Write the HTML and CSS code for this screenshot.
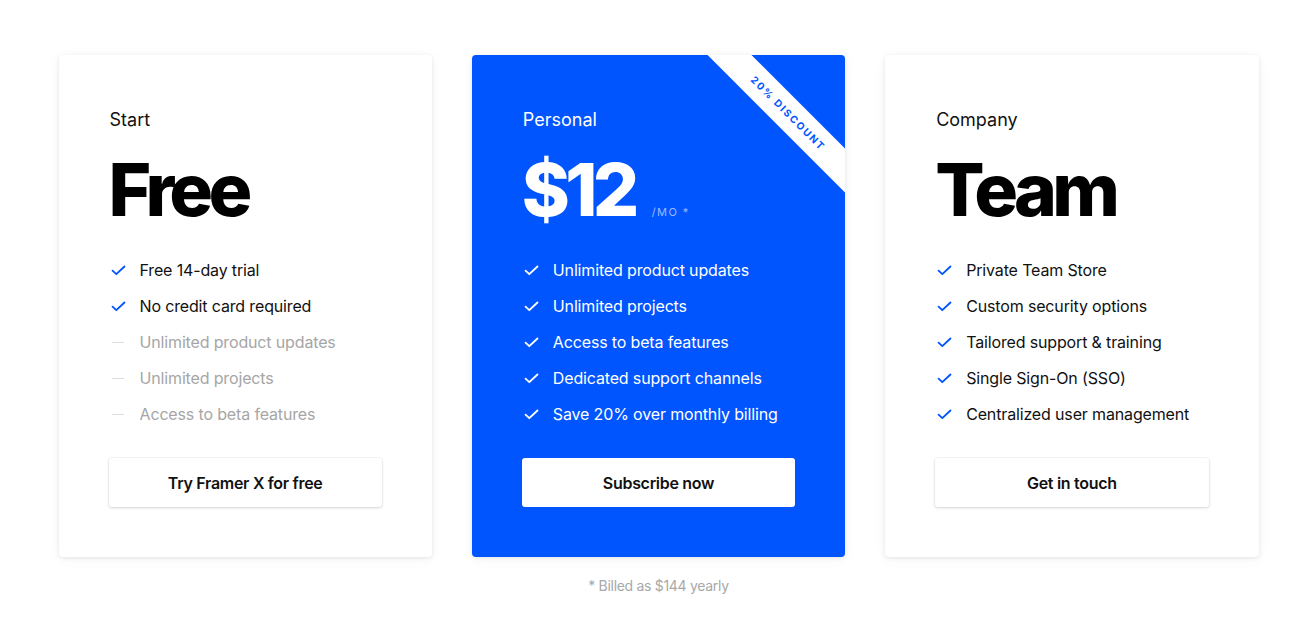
FILE: index.html
```html
<!DOCTYPE html>
<html lang="en">
<head>
<meta charset="utf-8">
<title>Pricing</title>
<link rel="stylesheet" href="styles.css">
</head>
<body>
<main class="pricing">
  <div class="cards">
    <section class="card">
      <div class="label">Start</div>
      <div class="price"><span class="amount">Free</span></div>
      <ul class="features">
        <li class="on"><svg class="ic" viewBox="0 0 16 12"><path d="M1.5 6.2 L5.6 10 L14.5 1.6"/></svg>Free 14-day trial</li>
        <li class="on"><svg class="ic" viewBox="0 0 16 12"><path d="M1.5 6.2 L5.6 10 L14.5 1.6"/></svg>No credit card required</li>
        <li class="off"><span class="dash"></span>Unlimited product updates</li>
        <li class="off"><span class="dash"></span>Unlimited projects</li>
        <li class="off"><span class="dash"></span>Access to beta features</li>
      </ul>
      <button class="btn">Try Framer X for free</button>
    </section>
    <section class="card card-blue">
      <div class="ribbon">20% DISCOUNT</div>
      <div class="label">Personal</div>
      <div class="price"><span class="amount">$12</span><span class="per">/MO *</span></div>
      <ul class="features">
        <li class="on"><svg class="ic" viewBox="0 0 16 12"><path d="M1.5 6.2 L5.6 10 L14.5 1.6"/></svg>Unlimited product updates</li>
        <li class="on"><svg class="ic" viewBox="0 0 16 12"><path d="M1.5 6.2 L5.6 10 L14.5 1.6"/></svg>Unlimited projects</li>
        <li class="on"><svg class="ic" viewBox="0 0 16 12"><path d="M1.5 6.2 L5.6 10 L14.5 1.6"/></svg>Access to beta features</li>
        <li class="on"><svg class="ic" viewBox="0 0 16 12"><path d="M1.5 6.2 L5.6 10 L14.5 1.6"/></svg>Dedicated support channels</li>
        <li class="on"><svg class="ic" viewBox="0 0 16 12"><path d="M1.5 6.2 L5.6 10 L14.5 1.6"/></svg>Save 20% over monthly billing</li>
      </ul>
      <button class="btn">Subscribe now</button>
    </section>
    <section class="card">
      <div class="label">Company</div>
      <div class="price"><span class="amount">Team</span></div>
      <ul class="features">
        <li class="on"><svg class="ic" viewBox="0 0 16 12"><path d="M1.5 6.2 L5.6 10 L14.5 1.6"/></svg>Private Team Store</li>
        <li class="on"><svg class="ic" viewBox="0 0 16 12"><path d="M1.5 6.2 L5.6 10 L14.5 1.6"/></svg>Custom security options</li>
        <li class="on"><svg class="ic" viewBox="0 0 16 12"><path d="M1.5 6.2 L5.6 10 L14.5 1.6"/></svg>Tailored support &amp; training</li>
        <li class="on"><svg class="ic" viewBox="0 0 16 12"><path d="M1.5 6.2 L5.6 10 L14.5 1.6"/></svg>Single Sign-On (SSO)</li>
        <li class="on"><svg class="ic" viewBox="0 0 16 12"><path d="M1.5 6.2 L5.6 10 L14.5 1.6"/></svg>Centralized user management</li>
      </ul>
      <button class="btn">Get in touch</button>
    </section>
  </div>
  <p class="note">* Billed as $144 yearly</p>
</main>
</body>
</html>
```
FILE: styles.css
```css
* { box-sizing: border-box; }
html, body { margin: 0; padding: 0; background: #fff; }
body {
  font-family: Inter, "Helvetica Neue", Arial, sans-serif;
  color: #111;
  -webkit-font-smoothing: antialiased;
}
.pricing {
  width: 1201px;
  margin: 0 auto;
  padding: 55px 0 0 1px;
}
.cards {
  display: grid;
  grid-template-columns: repeat(3, 1fr);
  gap: 40px;
}
.card {
  position: relative;
  overflow: hidden;
  background: #fff;
  border-radius: 4px;
  box-shadow: 0 1px 4px rgba(0,0,0,0.09), 0 2px 14px rgba(0,0,0,0.04);
  height: 502px;
  padding: 54px 50px 0 50px;
}
.card-blue {
  background: #0055ff;
  color: #fff;
}
.label {
  font-size: 18px;
  line-height: 22px;
  font-weight: 400;
  padding-left: 1px;
}
.price {
  display: flex;
  align-items: baseline;
  margin-top: 19px;
  height: 80px;
  color: #000;
}
.card-blue .price { color: #fff; }
.amount {
  font-size: 73px;
  line-height: 80px;
  font-weight: 800;
  letter-spacing: -4.7px;
}
.per {
  margin-left: 17px;
  font-size: 11px;
  letter-spacing: 1.4px;
  color: rgba(255,255,255,0.6);
}
.features {
  list-style: none;
  margin: 0;
  padding: 0;
  margin-top: 22px;
}
.features li {
  display: flex;
  align-items: center;
  height: 36px;
  font-size: 16px;
  letter-spacing: -0.15px;
}
.features li.off { color: #a6a6a6; }
.ic {
  width: 15px;
  height: 11px;
  margin-left: 2px;
  margin-right: 14px;
  fill: none;
  stroke: #0055ff;
  stroke-width: 2;
  stroke-linecap: round;
  stroke-linejoin: round;
}
.card-blue .ic { stroke: #fff; }
.dash {
  display: inline-block;
  width: 12px;
  height: 1px;
  background: #dcdcdc;
  margin-left: 3px;
  margin-right: 16px;
}
.btn {
  display: block;
  width: 100%;
  height: 49px;
  margin-top: 26px;
  border: none;
  border-radius: 3px;
  background: #fff;
  font-family: inherit;
  font-size: 16px;
  font-weight: 600;
  letter-spacing: -0.3px;
  color: #111;
  box-shadow: 0 1px 3px rgba(0,0,0,0.14), 0 0 0 1px rgba(0,0,0,0.03);
}
.card-blue .btn { box-shadow: none; }
.ribbon {
  position: absolute;
  top: 43px;
  left: 216px;
  width: 200px;
  height: 31px;
  background: #fff;
  color: #0055ff;
  font-size: 10px;
  font-weight: 700;
  letter-spacing: 1.8px;
  line-height: 31px;
  text-align: center;
  transform: rotate(45deg);
}
.note {
  margin: 20px 0 0;
  text-align: center;
  font-size: 14px;
  letter-spacing: -0.3px;
  color: #a8a8a8;
}
```
